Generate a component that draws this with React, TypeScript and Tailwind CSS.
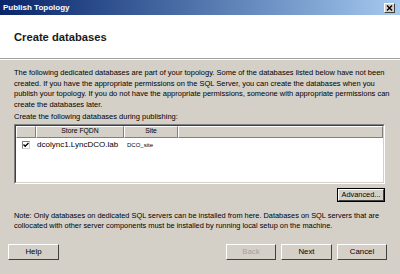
import React from 'react'

const font = { fontFamily: '"Liberation Sans", Arial, sans-serif' }

const Btn: React.FC<{ label: string; w: string; disabled?: boolean }> = ({ label, w, disabled }) => (
  <div className={`${w} h-[16px]`}>
    <div className="h-full w-full border border-t-white border-l-white border-r-[#404040] border-b-[#404040] bg-[#d4d0c8] flex items-center justify-center">
      <span className={`text-[7.8px] leading-none ${disabled ? 'text-[#a0a0a0]' : 'text-black'}`}>{label}</span>
    </div>
  </div>
)

export default function App() {
  return (
    <div className="w-[400px] h-[274px] bg-[#d4d0c8] flex flex-col overflow-hidden" style={font}>
      {/* title bar */}
      <div className="h-[15px] bg-gradient-to-r from-[#0a246a] to-[#a6caf0] flex items-center justify-between pl-[3px] pr-[5px]">
        <span className="text-white text-[8px] font-bold leading-none">Publish Topology</span>
        <div className="w-[11px] h-[10px] bg-[#d4d0c8] border border-t-white border-l-white border-r-[#404040] border-b-[#404040] flex items-center justify-center">
          <svg width="7" height="6" viewBox="0 0 7 6">
            <path d="M1 0.5 L6 5.5 M6 0.5 L1 5.5" stroke="black" strokeWidth="1.4" />
          </svg>
        </div>
      </div>

      {/* header */}
      <div className="h-[44px] bg-white border-b border-[#a0a0a0] pl-[14px] pt-[17px]">
        <div className="text-[11.2px] font-bold leading-none text-[#1a1a1a]">Create databases</div>
      </div>

      {/* body */}
      <div className="flex flex-col px-[14px] pt-[8px] border-t border-white">
        <p className="text-[7.5px] leading-[10.5px] text-black whitespace-nowrap">
          The following dedicated databases are part of your topology. Some of the databases listed below have not been
          <br />
          created. If you have the appropriate permissions on the SQL Server, you can create the databases when you
          <br />
          publish your topology. If you do not have the appropriate permissions, someone with appropriate permissions can
          <br />
          create the databases later.
        </p>
        <p className="mt-[2px] text-[7.5px] leading-[10.5px] text-black">Create the following databases during publishing:</p>

        <div className="mt-[1px] h-[60px] w-[371px] border border-t-[#808080] border-l-[#808080] border-r-white border-b-white">
          <div className="h-full w-full border border-t-[#404040] border-l-[#404040] border-r-[#d4d0c8] border-b-[#d4d0c8] bg-white flex flex-col">
            <div className="h-[12px] flex bg-[#d4d0c8] text-[6.8px] text-black">
              <div className="w-[20px] border-r border-b border-r-[#808080] border-b-[#808080] border-t border-l border-t-white border-l-white" />
              <div className="w-[88px] border-r border-b border-r-[#808080] border-b-[#808080] border-t border-l border-t-white border-l-white flex items-center justify-center">
                Store FQDN
              </div>
              <div className="w-[54px] border-r border-b border-r-[#808080] border-b-[#808080] border-t border-l border-t-white border-l-white flex items-center justify-center">
                Site
              </div>
              <div className="flex-1 border-r border-b border-r-[#808080] border-b-[#808080] border-t border-l border-t-white border-l-white" />
            </div>
            <div className="flex items-center h-[12px] mt-[1px]">
              <div className="w-[20px] flex justify-center">
                <div className="w-[8px] h-[8px] border border-t-[#808080] border-l-[#808080] border-r-[#d4d0c8] border-b-[#d4d0c8] bg-white flex items-center justify-center">
                  <svg width="6" height="6" viewBox="0 0 6 6">
                    <path d="M0.5 2.5 L2.2 4.3 L5.5 1" stroke="black" strokeWidth="1.3" fill="none" />
                  </svg>
                </div>
              </div>
              <div className="w-[88px] pl-[1px] text-[8px] leading-none text-black">dcolync1.LyncDCO.lab</div>
              <div className="w-[54px] pl-[3px] text-[6px] leading-none text-black">DCO_site</div>
            </div>
          </div>
        </div>

        <div className="mt-[4px] flex justify-end pr-[1px]">
          <div className="w-[48px] h-[14px] border border-black">
            <div className="h-full w-full border border-t-white border-l-white border-r-[#404040] border-b-[#404040] flex items-center justify-center">
              <span className="text-[7.4px] leading-none text-black">Advanced...</span>
            </div>
          </div>
        </div>

        <p className="mt-[9px] text-[7.4px] leading-[10px] text-black whitespace-nowrap">
          Note: Only databases on dedicated SQL servers can be installed from here. Databases on SQL servers that are
          <br />
          collocated with other server components must be installed by running local setup on the machine.
        </p>
      </div>

      {/* buttons */}
      <div className="mt-[13px] flex items-center pl-[8px] pr-[13px]">
        <Btn label="Help" w="w-[51px]" />
        <div className="flex-1" />
        <div className="flex gap-[5px]">
          <Btn label="Back" w="w-[50px]" disabled />
          <Btn label="Next" w="w-[51px]" />
          <Btn label="Cancel" w="w-[50px]" />
        </div>
      </div>
    </div>
  )
}
